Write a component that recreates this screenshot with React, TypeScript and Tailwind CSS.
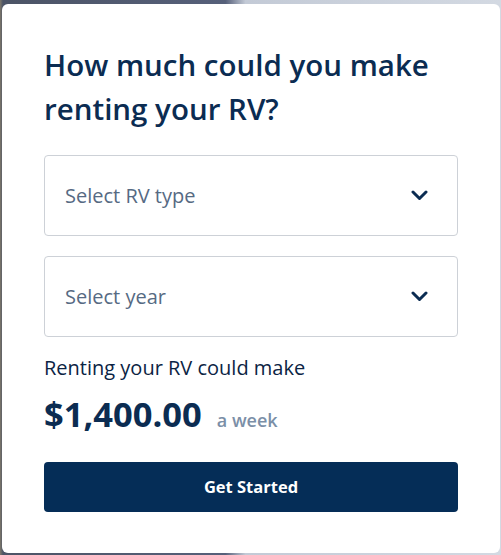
import { useState } from "react";

const FONT = { fontFamily: "'Open Sans', Lato, sans-serif" };

function Chevron() {
  return (
    <svg width="17" height="11" viewBox="0 0 17 11" fill="none">
      <polyline
        points="2,2 8.5,8.5 15,2"
        stroke="#0b2c52"
        strokeWidth="3"
        strokeLinecap="round"
        strokeLinejoin="round"
      />
    </svg>
  );
}

function SelectBox({ label }: { label: string }) {
  return (
    <button
      type="button"
      className="flex h-[81px] w-full items-center justify-between rounded-[4px] border border-[#cdd1d7] bg-white pl-[20px] pr-[29px] text-left"
    >
      <span className="text-[20px] text-[#566a83]">{label}</span>
      <Chevron />
    </button>
  );
}

export default function App() {
  const [amount] = useState("$1,400.00");

  return (
    <div
      className="h-[555px] w-[501px] overflow-hidden bg-[linear-gradient(90deg,#7d776a_0px,#4c5466_3px,#56607a_45%,#c3cad6_49%,#d3d9e2_100%)] pl-[2px] pt-[4px]"
      style={FONT}
    >
      <div className="flex h-[549px] w-[498px] flex-col rounded-[6px] bg-white px-[42px] pt-[39px]">
        <h2 className="text-[29.5px] font-semibold leading-[44px] text-[#0b2c52]">
          How much could you make renting your RV?
        </h2>

        <div className="mt-[24px] flex flex-col gap-[20px]">
          <SelectBox label="Select RV type" />
          <SelectBox label="Select year" />
        </div>

        <p className="mt-[19px] text-[20px] leading-[24px] text-[#0b2444]">
          Renting your RV could make
        </p>

        <div className="mt-[14px] flex items-baseline gap-[15px]">
          <span className="text-[34.5px] font-bold leading-[40px] text-[#0b2c52]">{amount}</span>
          <span className="text-[18px] font-semibold text-[#7b8fa7]">a week</span>
        </div>

        <button
          type="button"
          className="mt-[28px] h-[50px] w-full rounded-[4px] bg-[#052d57] text-[16.5px] font-bold text-white"
        >
          Get Started
        </button>
      </div>
    </div>
  );
}
